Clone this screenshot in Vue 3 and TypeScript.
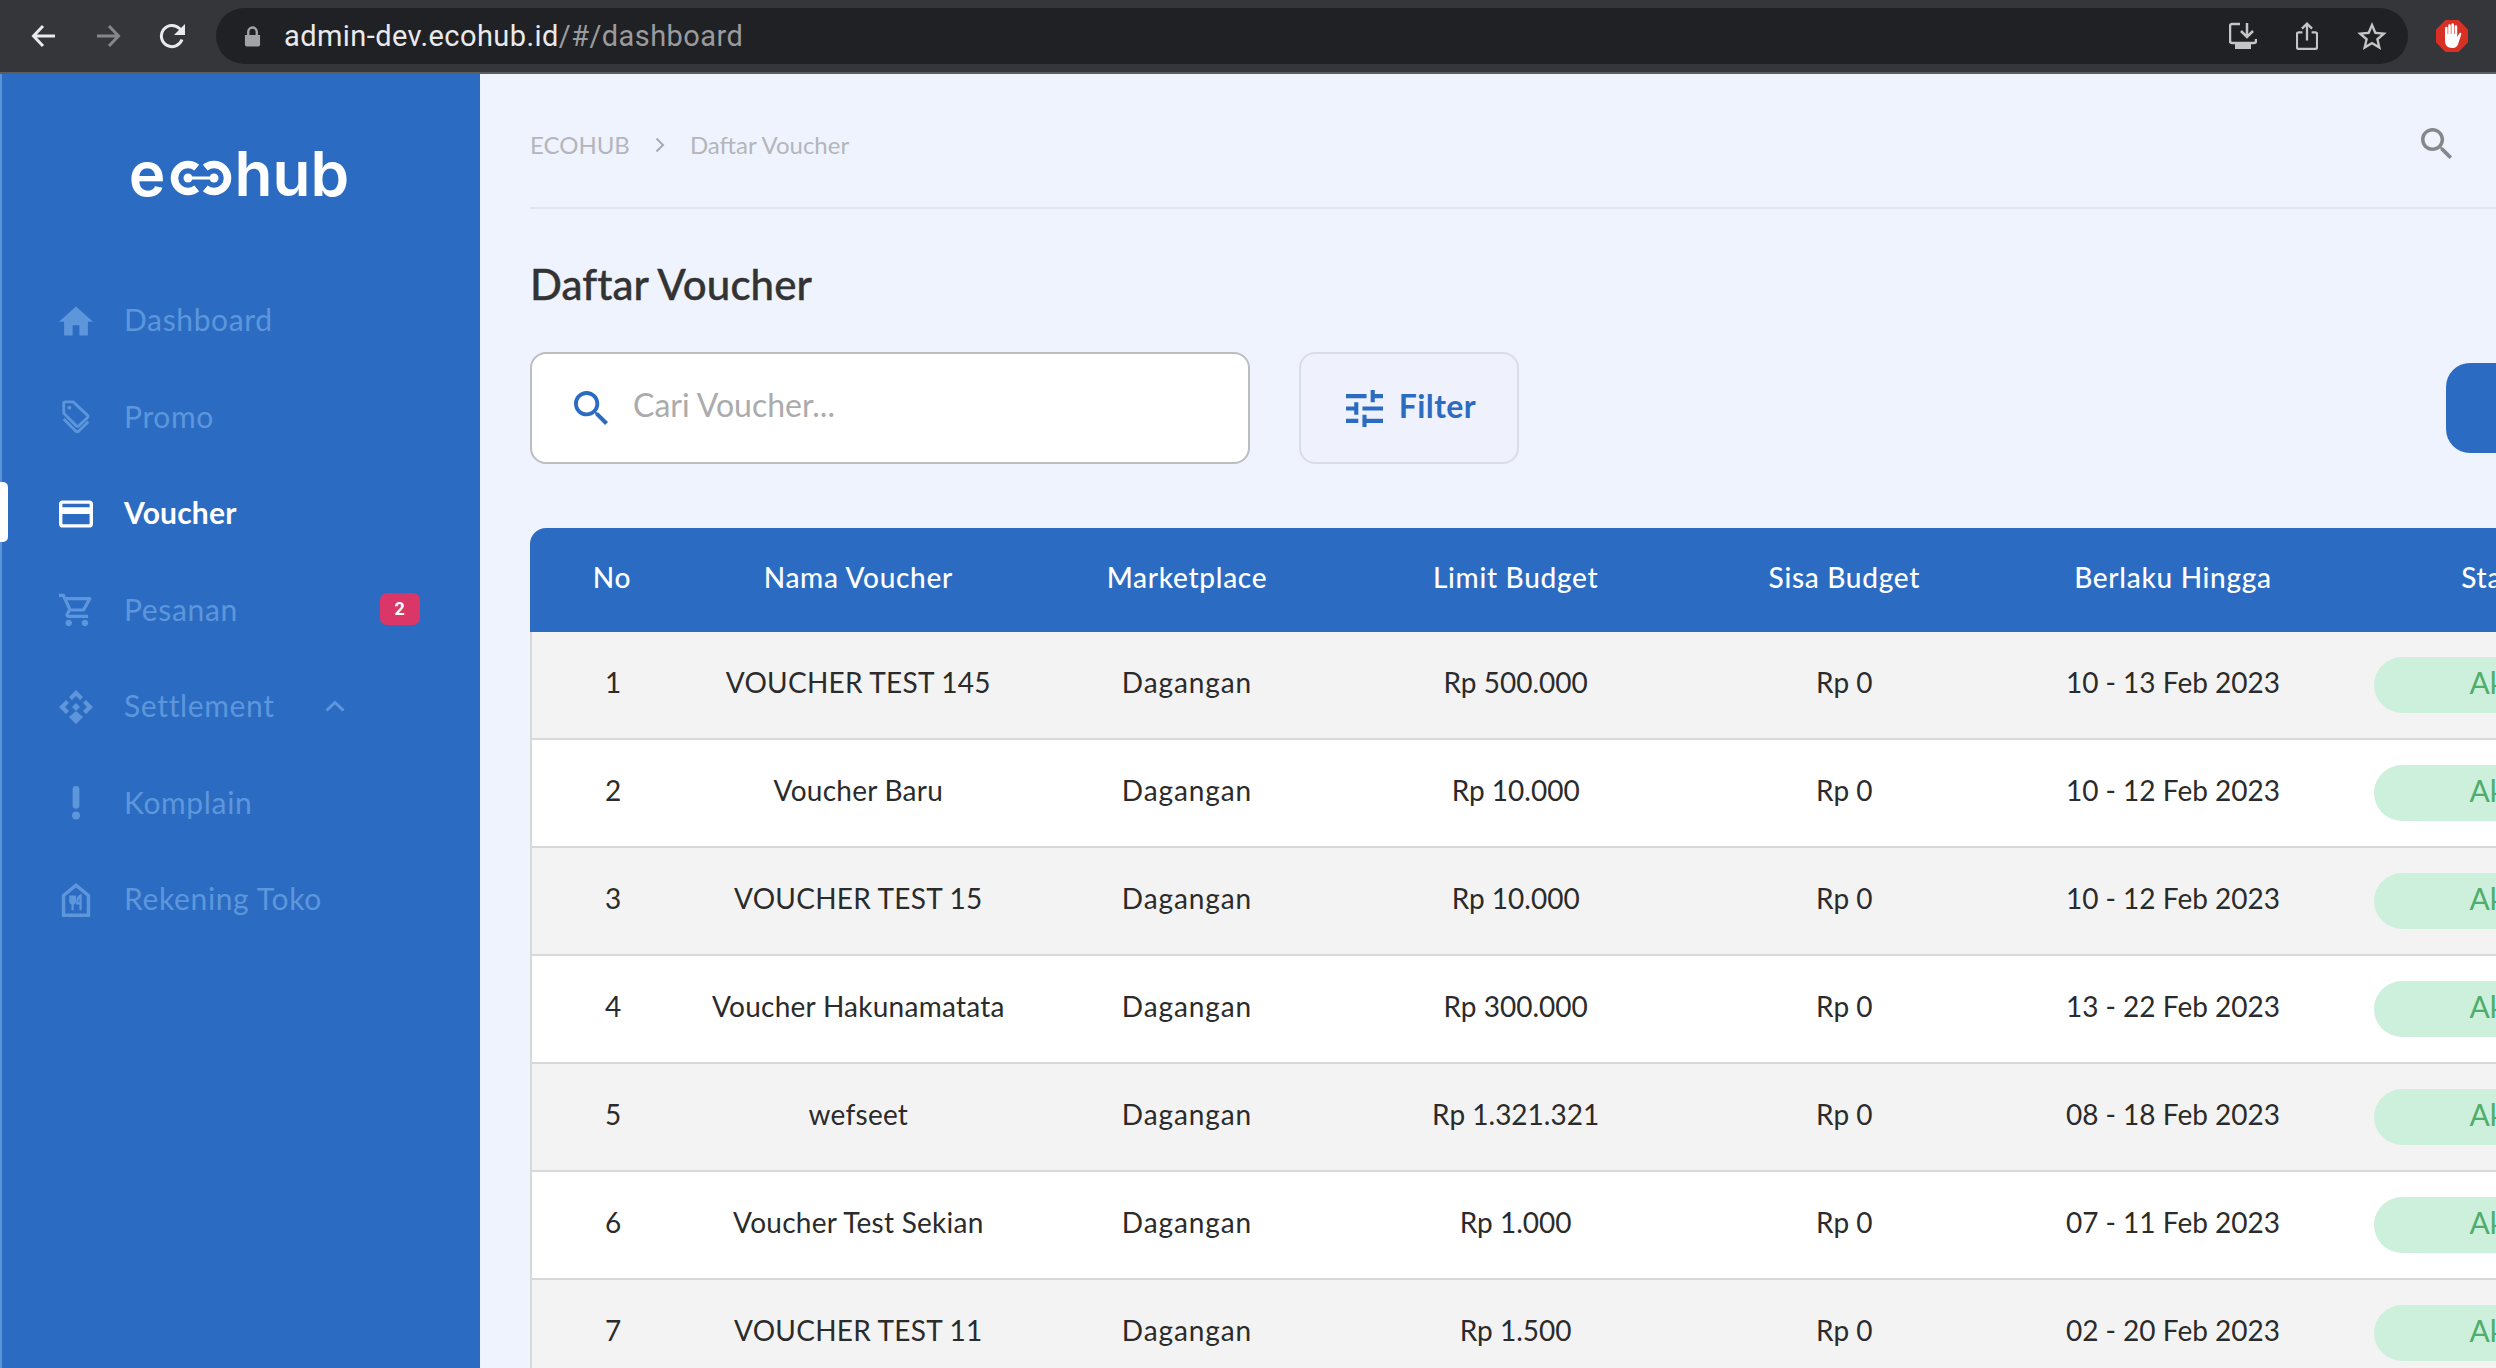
<script setup lang="ts">
interface Voucher {
  name: string
  limit: string
  period: string
}

const vouchers: Voucher[] = [
  { name: 'VOUCHER TEST 145', limit: 'Rp 500.000', period: '10 - 13 Feb 2023' },
  { name: 'Voucher Baru', limit: 'Rp 10.000', period: '10 - 12 Feb 2023' },
  { name: 'VOUCHER TEST 15', limit: 'Rp 10.000', period: '10 - 12 Feb 2023' },
  { name: 'Voucher Hakunamatata', limit: 'Rp 300.000', period: '13 - 22 Feb 2023' },
  { name: 'wefseet', limit: 'Rp 1.321.321', period: '08 - 18 Feb 2023' },
  { name: 'Voucher Test Sekian', limit: 'Rp 1.000', period: '07 - 11 Feb 2023' },
  { name: 'VOUCHER TEST 11', limit: 'Rp 1.500', period: '02 - 20 Feb 2023' },
]

const columns = ['No', 'Nama Voucher', 'Marketplace', 'Limit Budget', 'Sisa Budget', 'Berlaku Hingga', 'Status']
</script>

<template>
  <div class="app">
    <header class="chrome">
      <svg class="nav-icon" viewBox="0 0 26 26"><path d="M24 13H3M12 3 2.500 13 12 23" /></svg>
      <svg class="nav-icon dim" viewBox="0 0 26 26"><path d="M2 13h21M14 3l9.500 10L14 23" /></svg>
      <svg class="nav-icon reload" viewBox="0 0 28 26">
        <path d="M23 16.500A10.600 10.600 0 1 1 20.500 5.500L24 9" />
        <path class="solid" d="M26 1v11H15z" />
      </svg>
      <div class="omnibox">
        <svg class="lock" viewBox="0 0 18 21">
          <path d="M1 9h16v10a2 2 0 0 1-2 2H3a2 2 0 0 1-2-2z" />
          <path class="shackle" d="M4.500 9V5.500a4.500 4.500 0 0 1 9 0V9" />
        </svg>
        <div class="url">admin-dev.ecohub.id<span>/#/dashboard</span></div>
        <div class="omni-actions">
          <svg class="omni-icon" viewBox="0 0 28 28">
            <path d="M11 2H3a2 2 0 0 0-2 2v15a2 2 0 0 0 2 2h22a2 2 0 0 0 2-2v-2" />
            <path d="M18 1v13M12 9l6 6 6-6" />
            <path class="solid" d="M6 22h16v5H6z" />
          </svg>
          <svg class="omni-icon share" viewBox="0 0 24 30">
            <path d="M7 11H3a2 2 0 0 0-2 2v14a2 2 0 0 0 2 2h18a2 2 0 0 0 2-2V13a2 2 0 0 0-2-2h-4" />
            <path d="M12 20V2M6.500 7 12 1.500 17.500 7" />
          </svg>
          <svg class="omni-icon star" viewBox="2 2 20 19">
            <path class="solid" d="M22 9.240l-7.190-.62L12 2 9.190 8.630 2 9.240l5.460 4.730L5.820 21 12 17.270 18.180 21l-1.630-7.030L22 9.240zM12 15.400l-3.760 2.270 1-4.280-3.320-2.880 4.380-.38L12 6.100l1.710 4.040 4.380.38-3.320 2.880 1 4.280L12 15.400z" />
          </svg>
        </div>
      </div>
      <svg class="adblock" viewBox="0 0 32 32">
        <polygon points="9.500,0 22.500,0 32,9.500 32,22.500 22.500,32 9.500,32 0,22.500 0,9.500" fill="#d93025" />
        <path fill="#fff" d="M9 16V8a1.300 1.300 0 0 1 2.600 0v6h.6V5.500a1.300 1.300 0 0 1 2.600 0V14h.6V4.500a1.300 1.300 0 0 1 2.600 0V14h.6V6.500a1.300 1.300 0 0 1 2.600 0V17l2-3.500c.8-1.300 2.600-.6 2 .9l-2.600 8.100C22 26 20 28 16 28c-4.500 0-7-3-7-7z" />
      </svg>
    </header>

    <div class="body">
      <aside class="sidebar">
        <div class="logo">
          <span>e</span>
          <svg class="logo-link" viewBox="0 0 62 36">
            <path d="M26.700 7.700A13.500 13.500 0 1 0 26.700 28.300" />
            <path d="M35.300 7.700A13.500 13.500 0 1 1 35.300 28.300" />
            <path class="bar" d="M18 18h26" />
            <circle cx="18" cy="18" r="4.500" />
            <circle cx="44" cy="18" r="4.500" />
          </svg>
          <span>hub</span>
        </div>

        <nav class="menu">
          <a class="menu-item">
            <svg class="menu-icon" viewBox="2 3 20 17"><path class="solid" d="M10 20v-6h4v6h5v-8h3L12 3 2 12h3v8z" /></svg>
            <span>Dashboard</span>
          </a>
          <a class="menu-item">
            <svg class="menu-icon" viewBox="0 0 30 36">
              <path class="line" d="M2 3.500A1.500 1.500 0 0 1 3.500 2h8.500l15 14a2 2 0 0 1 0 2.800l-9 8.500a2 2 0 0 1-2.800 0L2 14z" />
              <path class="line" d="M2 20l13 13a2 2 0 0 0 2.800 0L28 23" />
              <circle class="solid" cx="8" cy="8" r="2" />
            </svg>
            <span>Promo</span>
          </a>
          <a class="menu-item active">
            <svg class="menu-icon" viewBox="2 4 20 16"><path class="solid" d="M20 4H4c-1.110 0-1.990.89-1.990 2L2 18c0 1.110.89 2 2 2h16c1.110 0 2-.89 2-2V6c0-1.110-.89-2-2-2zm0 14H4v-6h16v6zm0-10H4V6h16v2z" /></svg>
            <span>Voucher</span>
          </a>
          <a class="menu-item">
            <svg class="menu-icon" viewBox="1 2 21 20"><path class="solid" d="M15.550 13c.75 0 1.410-.41 1.750-1.030l3.580-6.490c.37-.66-.11-1.480-.87-1.480H5.210l-.94-2H1v2h2l3.600 7.590-1.350 2.440C4.520 15.370 5.480 17 7 17h12v-2H7l1.100-2h7.450zM6.160 6h12.150l-2.760 5H8.530L6.160 6zM7 18c-1.100 0-1.990.9-1.990 2S5.900 22 7 22s2-.9 2-2-.9-2-2-2zm10 0c-1.100 0-1.990.9-1.990 2s.89 2 1.990 2 2-.9 2-2-.9-2-2-2z" /></svg>
            <span>Pesanan</span>
            <b class="badge">2</b>
          </a>
          <a class="menu-item">
            <svg class="menu-icon" viewBox="0 0 34 34">
              <path class="solid" d="M17 0l7 7-3 3-4-4-4 4-3-3zM34 17l-7 7-3-3 4-4-4-4 3-3zM17 34l-7-7 7-6 7 6zM0 17l7-7 3 3-4 4 4 4-3 3zM17 13l4 4-4 4-4-4z" />
            </svg>
            <span>Settlement</span>
            <svg class="caret" viewBox="0 0 20 12"><path d="M1.500 10.500 10 2.500l8.500 8" /></svg>
          </a>
          <a class="menu-item">
            <svg class="menu-icon" viewBox="0 0 30 30">
              <rect class="solid" x="12" y="0" width="6" height="20" rx="3" />
              <circle class="solid" cx="15" cy="26" r="3.500" />
            </svg>
            <span>Komplain</span>
          </a>
          <a class="menu-item">
            <svg class="menu-icon" viewBox="0 0 30 30">
              <path class="line" d="M4 28.500V11L15 2l11 9v17.500z" />
              <path class="line thin" d="M10 11v5a2 2 0 0 0 4 0v-5M12 11v13M19 24V11c-2 1-3 3-3 7h3" />
            </svg>
            <span>Rekening Toko</span>
          </a>
        </nav>
      </aside>

      <main class="main">
        <div class="topbar">
          <div class="crumbs">
            <span>ECOHUB</span>
            <svg class="crumb-sep" viewBox="0 0 10 16"><path d="M1.500 1.500 8 8l-6.500 6.500" /></svg>
            <span>Daftar Voucher</span>
          </div>
          <svg class="top-search" viewBox="3 3 18 18"><path d="M15.500 14h-.79l-.28-.27C15.410 12.590 16 11.110 16 9.500 16 5.910 13.090 3 9.500 3S3 5.910 3 9.500 5.910 16 9.500 16c1.610 0 3.090-.59 4.230-1.570l.27.28v.79l5 4.990L20.490 19l-4.990-5zm-6 0C7.010 14 5 11.990 5 9.500S7.010 5 9.500 5 14 7.010 14 9.500 11.990 14 9.500 14z" /></svg>
        </div>

        <div class="content">
          <h1>Daftar Voucher</h1>

          <div class="toolbar">
            <label class="search">
              <svg viewBox="3 3 18 18"><path d="M15.500 14h-.79l-.28-.27C15.410 12.590 16 11.110 16 9.500 16 5.910 13.090 3 9.500 3S3 5.910 3 9.500 5.910 16 9.500 16c1.610 0 3.090-.59 4.230-1.570l.27.28v.79l5 4.990L20.490 19l-4.990-5zm-6 0C7.010 14 5 11.990 5 9.500S7.010 5 9.500 5 14 7.010 14 9.500 11.990 14 9.500 14z" /></svg>
              <input type="text" placeholder="Cari Voucher..." />
            </label>
            <button class="filter" type="button">
              <svg viewBox="3 3 18 18"><path d="M3 17v2h6v-2H3zM3 5v2h10V5H3zm10 16v-2h8v-2h-8v-2h-2v6h2zM7 9v2H3v2h4v2h2V9H7zm14 4v-2H11v2h10zm-6-4h2V7h4V5h-4V3h-2v6z" /></svg>
              <span>Filter</span>
            </button>
            <button class="add" type="button"></button>
          </div>

          <table class="table">
            <colgroup>
              <col class="col-no" />
              <col v-for="n in 6" :key="n" />
            </colgroup>
            <thead>
              <tr>
                <th v-for="col in columns" :key="col">{{ col }}</th>
              </tr>
            </thead>
            <tbody>
              <tr v-for="(v, i) in vouchers" :key="i">
                <td>{{ i + 1 }}</td>
                <td class="name">{{ v.name }}</td>
                <td class="market">Dagangan</td>
                <td>{{ v.limit }}</td>
                <td>Rp 0</td>
                <td>{{ v.period }}</td>
                <td class="state"><span class="status">Aktif</span></td>
              </tr>
            </tbody>
          </table>
        </div>
      </main>
    </div>
  </div>
</template>

<style scoped>
.app {
  width: 2496px;
  height: 1368px;
  overflow: hidden;
  display: flex;
  flex-direction: column;
  background: #eff3fe;
  font-family: Lato, "Open Sans", sans-serif;
}

/* browser bar */
.chrome {
  flex: none;
  height: 72px;
  box-sizing: content-box;
  display: flex;
  align-items: center;
  padding-left: 31px;
  background: #35363a;
  border-bottom: 2px solid #5c5d60;
}
.nav-icon {
  width: 26px;
  height: 26px;
  margin-right: 38px;
  fill: none;
  stroke: #e8eaed;
  stroke-width: 3;
}
.nav-icon.dim {
  stroke: #85868a;
}
.nav-icon.reload {
  width: 28px;
  margin-right: 29px;
}
.nav-icon .solid {
  fill: #e8eaed;
  stroke: none;
}
.omnibox {
  width: 2192px;
  height: 56px;
  display: flex;
  align-items: center;
  padding-left: 28px;
  box-sizing: border-box;
  border-radius: 28px;
  background: #202124;
}
.lock {
  width: 17px;
  height: 21px;
  fill: #a1a3a6;
}
.lock .shackle {
  fill: none;
  stroke: #a1a3a6;
  stroke-width: 2.500;
}
.url {
  margin-left: 23px;
  font-family: Roboto, sans-serif;
  font-size: 29px;
  letter-spacing: 0.42px;
  color: #e8eaed;
}
.url span {
  color: #9a9b9e;
}
.omni-actions {
  margin-left: auto;
  margin-right: 21px;
  display: flex;
  align-items: center;
  gap: 39px;
}
.omni-icon {
  width: 28px;
  height: 28px;
  fill: none;
  stroke: #c4c5c7;
  stroke-width: 2.500;
}
.omni-icon.share {
  width: 22px;
}
.omni-icon.star {
  width: 30px;
  stroke: none;
}
.omni-icon .solid {
  fill: #c4c5c7;
  stroke: none;
}
.adblock {
  width: 32px;
  height: 32px;
  margin-left: 28px;
}

.body {
  flex: 1;
  display: flex;
  min-height: 0;
}

/* sidebar */
.sidebar {
  flex: none;
  width: 480px;
  box-sizing: border-box;
  border-left: 2px solid #5b92d8;
  background: #2b6cc2;
}
.logo {
  display: flex;
  align-items: baseline;
  justify-content: center;
  height: 130px;
  padding-top: 72px;
  padding-right: 4px;
  box-sizing: border-box;
  font-family: Inter, sans-serif;
  font-size: 62px;
  line-height: 56px;
  font-weight: 600;
  color: #fff;
}
.logo-link {
  width: 62px;
  height: 36px;
  margin: 0 3px 0 4px;
  fill: #fff;
  stroke: #fff;
  stroke-width: 7.500;
}
.logo-link path {
  fill: none;
}
.logo-link .bar {
  stroke-width: 3;
}
.logo-link circle {
  stroke: none;
}
.menu {
  display: flex;
  flex-direction: column;
  margin-top: 67px;
}
.menu-item {
  position: relative;
  display: flex;
  align-items: center;
  height: 96.500px;
  padding-left: 57px;
  font-size: 30px;
  letter-spacing: 0.65px;
  color: #5d96db;
}
.menu-item.active {
  color: #fff;
  font-weight: 700;
  letter-spacing: 0.2px;
}
.menu-item.active::before {
  content: "";
  position: absolute;
  left: -2px;
  top: 18px;
  width: 8px;
  height: 60px;
  border-radius: 0 5px 5px 0;
  background: #fff;
}
.menu-icon {
  flex: none;
  width: 34px;
  height: 34px;
  margin: 3px 31px 0 0;
}
.menu-icon .solid {
  fill: #5d96db;
}
.menu-icon .line {
  fill: none;
  stroke: #5d96db;
  stroke-width: 3;
}
.menu-icon .thin {
  stroke-width: 2;
}
.menu-item.active .solid {
  fill: #fff;
}
.badge {
  position: absolute;
  left: 378px;
  width: 40px;
  height: 32px;
  display: flex;
  align-items: center;
  justify-content: center;
  border-radius: 7px;
  background: #da3668;
  color: #fff;
  font-family: Roboto, sans-serif;
  font-size: 18px;
  font-weight: 700;
}
.caret {
  position: absolute;
  left: 323px;
  width: 20px;
  height: 12px;
  margin-top: 2px;
  fill: none;
  stroke: #5d96db;
  stroke-width: 3;
}

/* main */
.main {
  flex: none;
  width: 2016px;
  padding-left: 50px;
  box-sizing: border-box;
}
.topbar {
  display: flex;
  align-items: center;
  justify-content: space-between;
  height: 124px;
  padding: 8px 43px 1px 0;
  border-bottom: 2px solid #e1e5f0;
  box-sizing: content-box;
}
.crumbs {
  display: flex;
  align-items: center;
  font-size: 24px;
  color: #b4b6bb;
}
.crumb-sep {
  width: 10px;
  height: 16px;
  margin: 2px 25px 0;
  fill: none;
  stroke: #a8aaaf;
  stroke-width: 2;
}
.top-search {
  width: 32px;
  height: 32px;
  fill: #85878a;
}
.content {
  width: 2136px;
}
h1 {
  margin: 0;
  padding-top: 50px;
  font-size: 42px;
  line-height: 50px;
  font-weight: 500;
  letter-spacing: 0.1px;
  -webkit-text-stroke: 0.4px #333;
  color: #333;
}
.toolbar {
  display: flex;
  align-items: center;
  gap: 49px;
  margin-top: 43px;
}
.search {
  display: flex;
  align-items: center;
  gap: 24px;
  width: 720px;
  height: 112px;
  padding-left: 42px;
  box-sizing: border-box;
  background: #fff;
  border: 2px solid #bcbdc0;
  border-radius: 16px;
}
.search svg {
  flex: none;
  width: 35px;
  height: 35px;
  fill: #2b6cc2;
}
.search input {
  flex: 1;
  min-width: 0;
  border: none;
  outline: none;
  background: none;
  padding: 0 0 8px;
  font: inherit;
  font-size: 32px;
  color: #333;
}
.search input::placeholder {
  color: #ababab;
  opacity: 1;
}
.filter {
  display: flex;
  align-items: center;
  justify-content: center;
  gap: 16px;
  width: 220px;
  height: 112px;
  padding: 0 0 0 4px;
  background: #eff2fd;
  border: 2px solid #d9dcea;
  border-radius: 16px;
  font: inherit;
  font-size: 32px;
  font-weight: 700;
  letter-spacing: 0.4px;
  color: #2b6cc2;
}
.filter span {
  padding-bottom: 5px;
}
.filter svg {
  width: 37px;
  height: 37px;
  fill: #2b6cc2;
}
.add {
  width: 220px;
  height: 90px;
  margin-left: auto;
  border: none;
  border-radius: 24px;
  background: #2b6cc2;
}
.table {
  width: 100%;
  margin-top: 64px;
  table-layout: fixed;
  border-collapse: separate;
  border-spacing: 0;
  font-size: 28px;
  color: #2b2b2b;
}
.col-no {
  width: 164px;
}
th {
  height: 104px;
  padding: 0 0 6px;
  box-sizing: border-box;
  background: #2b6cc2;
  color: #fff;
  font-weight: 500;
  letter-spacing: 0.7px;
  white-space: nowrap;
}
th:first-child {
  border-top-left-radius: 16px;
}
td {
  height: 108px;
  padding: 0 0 6px;
  box-sizing: border-box;
  text-align: center;
  white-space: nowrap;
  background: #fff;
  border-bottom: 2px solid #d8d8d8;
}
td:first-child {
  border-left: 2px solid #d8d8d8;
}
td.name {
  letter-spacing: 0.25px;
}
td.market {
  letter-spacing: 0.9px;
}
td.state {
  padding-bottom: 0;
}
tbody tr:nth-child(odd) td {
  background: #f3f3f3;
}
.status {
  display: inline-flex;
  align-items: center;
  justify-content: center;
  width: 256px;
  height: 56px;
  padding-bottom: 6px;
  box-sizing: border-box;
  border-radius: 28px;
  background: #cdf0dc;
  color: #4fae6c;
  font-size: 30px;
}
</style>

<style>
html,
body {
  overflow: hidden;
}
</style>
